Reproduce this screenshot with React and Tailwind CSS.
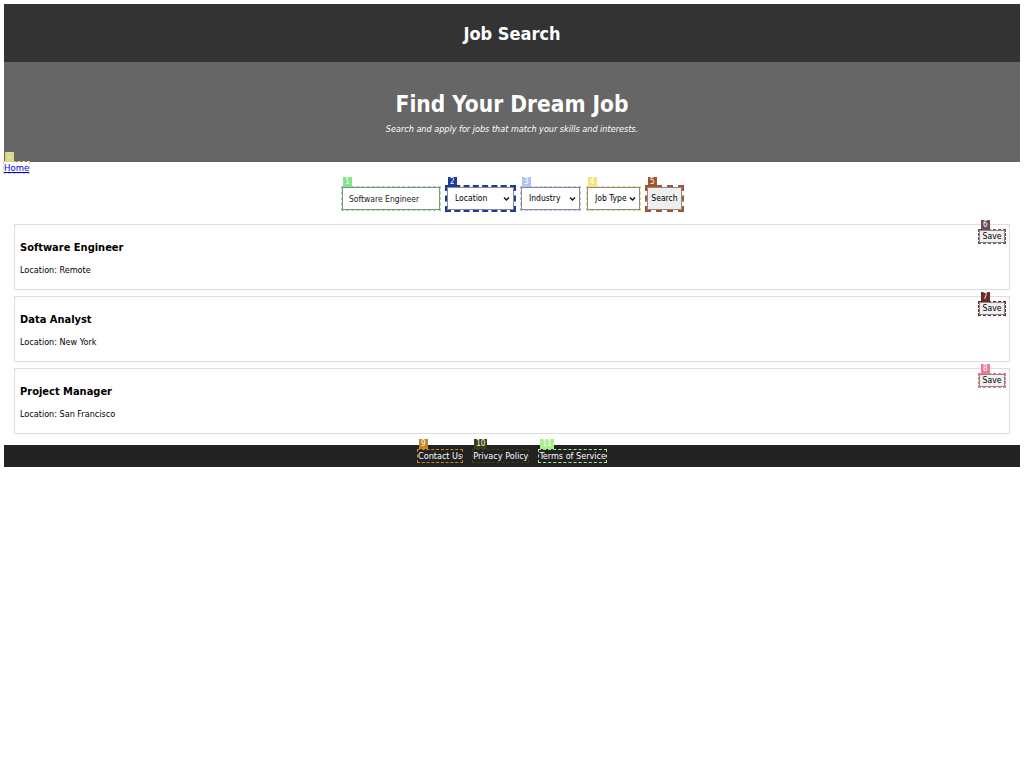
import React from "react";

function Badge({ n, bg, fg = "text-white", pos = "left-[1px] -top-[10px]" }) {
  return (
    <span
      className={`absolute ${pos} ${bg} ${fg} text-[8px] leading-[10px] px-[2px] min-w-[8px] h-[10px] text-center font-['DejaVu_Sans',sans-serif]`}
    >
      {n}
    </span>
  );
}

function Chevron() {
  return (
    <svg
      className="absolute right-[4px] top-1/2 -translate-y-1/2 pointer-events-none"
      width="7"
      height="5"
      viewBox="0 0 7 5"
    >
      <path d="M1 1 L3.5 3.5 L6 1" fill="none" stroke="#111" strokeWidth="1.4" />
    </svg>
  );
}

const jobs = [
  { title: "Software Engineer", loc: "Remote", n: 6, bg: "bg-[#6e4b5c]", ol: "outline-[#6e4b5c]" },
  { title: "Data Analyst", loc: "New York", n: 7, bg: "bg-[#6b2a2a]", ol: "outline-[#6b2a2a]" },
  { title: "Project Manager", loc: "San Francisco", n: 8, bg: "bg-[#f07896]", ol: "outline-[#f07896]" },
];

export default function App() {
  return (
    <div className="p-1 font-['DejaVu_Sans_Condensed','DejaVu_Sans',sans-serif] [font-stretch:condensed] text-black">
      <header className="bg-[#333333] h-[58px] flex items-center justify-center">
        <h1 className="text-white font-bold text-[18px]">Job Search</h1>
      </header>
      <section className="bg-[#666666] h-[100px] flex flex-col items-center justify-center pt-[2px]">
        <h2 className="text-white font-bold text-[22.5px] leading-[30px]">Find Your Dream Job</h2>
        <p className="text-white italic text-[9px] leading-[16px] mt-[2px]">
          Search and apply for jobs that match your skills and interests.
        </p>
      </section>
      <nav className="h-[11px] flex items-start">
        <a href="#" className="relative block text-[9.5px] leading-[11px] h-[11px] text-[#0000ee] underline outline outline-1 outline-dashed outline-[#d6d98a]">
          <Badge n="0" bg="bg-[#d6d98a]" fg="text-[#e8eab0]" pos="left-[1px] -top-[10px]" />
          Home
        </a>
      </nav>
      <div className="flex justify-center items-end gap-[7px] mt-[14px]">
        <div className="relative flex">
          <Badge n="1" bg="bg-[#7fe88c]" />
          <input
            defaultValue="Software Engineer"
            className="w-[98px] h-[23px] border border-[#8a8a8a] px-[6px] text-[8.5px] text-[#222] outline outline-1 outline-dashed outline-[#7fe88c]"
          />
        </div>
        <div className="relative flex">
          <Badge n="2" bg="bg-[#1a3a9e]" />
          <select className="appearance-none w-[67px] h-[23px] border border-[#8a8a8a] pl-[7px] text-[8.5px] bg-white outline-2 outline-dashed outline-[#1a3a9e]">
            <option>Location</option>
          </select>
          <Chevron />
        </div>
        <div className="relative flex">
          <Badge n="3" bg="bg-[#aec4f2]" />
          <select className="appearance-none w-[59px] h-[23px] border border-[#8a8a8a] pl-[7px] text-[8.5px] bg-white outline outline-1 outline-dashed outline-[#aec4f2]">
            <option>Industry</option>
          </select>
          <Chevron />
        </div>
        <div className="relative flex">
          <Badge n="4" bg="bg-[#f2e47a]" />
          <select className="appearance-none w-[53px] h-[23px] border border-[#8a8a8a] pl-[7px] text-[8.5px] bg-white outline outline-1 outline-dashed outline-[#e8d460]">
            <option>Job Type</option>
          </select>
          <Chevron />
        </div>
        <div className="relative flex">
          <Badge n="5" bg="bg-[#a3552f]" />
          <button className="w-[35px] h-[23px] border border-[#8a8a8a] bg-[#efefef] text-[8.5px] outline-2 outline-dashed outline-[#a3552f]">
            Search
          </button>
        </div>
      </div>
      <main className="mx-[10px] mt-[14px] flex flex-col gap-[6px]">
        {jobs.map((j) => (
          <div key={j.title} className="relative border border-[#dddddd] h-[66px] px-[5px] pt-[16px]">
            <h3 className="font-bold text-[11px] leading-[14px]">{j.title}</h3>
            <p className="text-[9px] leading-[12px] mt-[9px]">Location: {j.loc}</p>
            <div className="absolute right-[4px] top-[5px] flex">
              <div className="relative flex">
                <Badge n={j.n} bg={j.bg} pos="left-[2px] -top-[10px]" />
                <button className={`h-[13px] w-[26px] border border-[#8a8a8a] bg-[#efefef] text-[8.5px] leading-[11px] outline outline-1 outline-dashed ${j.ol}`}>
                  Save
                </button>
              </div>
            </div>
          </div>
        ))}
      </main>
      <footer className="bg-[#222222] h-[22px] mt-[11px] flex items-center justify-center gap-[11px]">
        <a href="#" className="relative text-white text-[9px] leading-[12px] outline outline-1 outline-dashed outline-[#c4861f]">
          <Badge n="9" bg="bg-[#c4861f]" pos="left-[1px] -top-[11px]" />
          Contact Us
        </a>
        <a href="#" className="relative text-white text-[9px] leading-[12px] outline outline-1 outline-dashed outline-[#3a4212]">
          <Badge n="10" bg="bg-[#3a4212]" pos="left-[1px] -top-[11px]" />
          Privacy Policy
        </a>
        <a href="#" className="relative text-white text-[9px] leading-[12px] outline outline-1 outline-dashed outline-[#a6f08a]">
          <Badge n="11" bg="bg-[#a6f08a]" pos="left-[1px] -top-[11px]" />
          Terms of Service
        </a>
      </footer>
    </div>
  );
}
